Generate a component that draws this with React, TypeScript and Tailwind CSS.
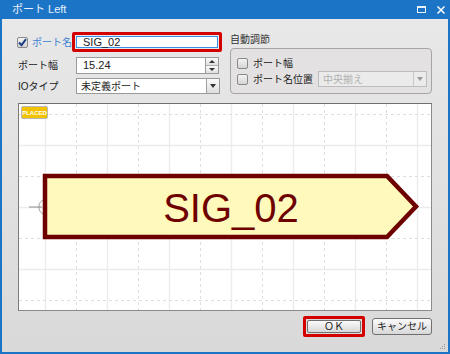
import React from 'react';

const font = "font-['Liberation_Sans','Noto_Sans_CJK_JP',sans-serif]";

function CheckBox({ checked }: { checked?: boolean }) {
    return (
        <span className="w-[11px] h-[11px] shrink-0 rounded-[2px] border border-[#8a8a8a] bg-gradient-to-b from-[#f4f4f4] to-[#d4d4d4] flex items-center justify-center">
            {checked && (
                <svg width="9" height="9" viewBox="0 0 9 9">
                    <path d="M1 4.5 L3.5 7.2 L8 1.2" fill="none" stroke="#1d3f86" strokeWidth="2" />
                </svg>
            )}
        </span>
    );
}

function Canvas() {
    const vx = Array.from({ length: 13 }, (_, k) => 26 + 31 * k);
    const hy = Array.from({ length: 7 }, (_, k) => 10 + 31 * k);
    return (
        <svg width="412" height="206" viewBox="0 0 412 206" className="block bg-white">
            {vx.map((x, k) => (
                <line key={'v' + x} x1={x + 0.5} y1="0" x2={x + 0.5} y2="206"
                    stroke={k % 2 === 0 ? '#ececec' : '#dedede'}
                    strokeWidth={k % 2 === 0 ? 1.5 : 1}
                    strokeDasharray={k % 2 === 0 ? undefined : '3 3'} />
            ))}
            {hy.map((y, k) => (
                <line key={'h' + y} x1="0" y1={y + 0.5} x2="412" y2={y + 0.5}
                    stroke={k % 2 === 1 ? '#ececec' : '#dedede'}
                    strokeWidth={k % 2 === 1 ? 1.5 : 1}
                    strokeDasharray={k % 2 === 1 ? undefined : '3 3'} />
            ))}

            {/* PLACED badge */}
            <rect x="2.5" y="2.5" width="26" height="12" rx="1.5" fill="#f2c200" stroke="#b8b8b8" />
            <text x="15.5" y="11" textAnchor="middle" fontSize="6" fontWeight="bold" fill="#fff"
                fontFamily="Liberation Sans, sans-serif">PLACED</text>

            {/* connector */}
            <line x1="10" y1="103" x2="23" y2="103" stroke="#777" strokeWidth="0.8" />
            <path d="M24 96 A8 8 0 0 0 24 110" fill="none" stroke="#888" strokeWidth="0.8" />

            {/* port */}
            <polygon points="26,72 368,72 397,102.5 368,133 26,133" fill="#fffabb" stroke="#6e0000" strokeWidth="4.5" />
            <text x="212" y="118" textAnchor="middle" fontSize="40" fill="#6e0000"
                fontFamily="Liberation Sans, sans-serif">SIG_02</text>
        </svg>
    );
}

function App() {
    return (
        <div className={`w-[450px] h-[354px] bg-[#1c74c6] flex flex-col text-[10px] text-[#222] whitespace-nowrap ${font}`}>

            <div className="h-[19px] flex items-center pl-[12px] pr-[5px] text-white/90 text-[11px]">
                <span className="leading-none">ポート Left</span>
                <div className="ml-auto flex items-center gap-[11px]">
                    <span className="w-[9px] h-[7px] border border-t-2 border-white/90" />
                    <svg width="8" height="8" viewBox="0 0 8 8">
                        <path d="M0.5 0.5 L7.5 7.5 M7.5 0.5 L0.5 7.5" stroke="#fff" strokeWidth="1.5" />
                    </svg>
                </div>
            </div>

            <div className="flex-1 mx-[2px] mb-[2px] bg-gradient-to-b from-[#e8e8e8] to-[#d9d9d9] flex flex-col px-[16px] pt-[13px] relative">

                <div className="flex gap-[9px] h-[62px]">
                    <div className="w-[203px] shrink-0 flex flex-col">
                        <div className="h-[20px] flex items-center">
                            <span className="-ml-[1px]"><CheckBox checked /></span>
                            <span className="ml-[4px] text-[#3b7fd6] shrink-0">ポート名</span>
                            <div className="ml-auto shrink-0 w-[150px] h-[20px] border-[3px] border-[#d40000] rounded-[2px] p-[1px]">
                                <div className="h-full bg-white border border-[#3b8ee6] flex items-center pl-[6px] leading-none text-[11px]">SIG_02</div>
                            </div>
                        </div>
                        <div className="mt-[5px] h-[17px] flex items-center">
                            <span className="w-[58px] shrink-0">ポート幅</span>
                            <div className="w-[130px] shrink-0 h-full bg-white border border-[#9a9a9a] flex items-center pl-[6px] text-[11px]">15.24</div>
                            <div className="w-[13px] shrink-0 h-full flex flex-col border border-l-0 border-[#9a9a9a]">
                                <div className="flex-1 bg-gradient-to-b from-[#fafafa] to-[#e0e0e0] border-b border-[#b0b0b0] flex items-center justify-center">
                                    <span className="w-0 h-0 border-x-[3px] border-x-transparent border-b-[3px] border-b-[#333]" />
                                </div>
                                <div className="flex-1 bg-gradient-to-b from-[#fafafa] to-[#e0e0e0] flex items-center justify-center">
                                    <span className="w-0 h-0 border-x-[3px] border-x-transparent border-t-[3px] border-t-[#333]" />
                                </div>
                            </div>
                        </div>
                        <div className="mt-[4px] h-[16px] flex items-center">
                            <span className="w-[58px] shrink-0">IOタイプ</span>
                            <div className="w-[144px] shrink-0 h-full bg-white border border-[#9a9a9a] flex items-center">
                                <span className="pl-[4px] flex-1">未定義ポート</span>
                                <div className="w-[13px] h-full border-l border-[#a0a0a0] bg-gradient-to-b from-[#fafafa] to-[#dedede] flex items-center justify-center">
                                    <span className="w-0 h-0 border-x-[3px] border-x-transparent border-t-[4px] border-t-[#333]" />
                                </div>
                            </div>
                        </div>
                    </div>

                    <div className="w-[202px] shrink-0 flex flex-col">
                        <span className="h-[14px] pt-[1px] leading-[13px] text-[#333]">自動調節</span>
                        <div className="mt-[2px] h-[46px] border border-[#a5a5a5] rounded-[4px] bg-[#e3e1e1] flex flex-col pl-[6px] pt-[6px]">
                            <div className="h-[16px] flex items-center gap-[5px]">
                                <CheckBox />
                                <span>ポート幅</span>
                            </div>
                            <div className="h-[16px] flex items-center gap-[5px]">
                                <CheckBox />
                                <span className="shrink-0">ポート名位置</span>
                                <div className="ml-auto mr-[7px] w-[109px] shrink-0 h-full border border-[#bdbdbd] bg-[#ebebeb] flex items-center">
                                    <span className="pl-[4px] flex-1 text-[#b0b0b0]">中央揃え</span>
                                    <div className="w-[13px] h-full border-l border-[#c8c8c8] flex items-center justify-center">
                                        <span className="w-0 h-0 border-x-[3px] border-x-transparent border-t-[4px] border-t-[#999]" />
                                    </div>
                                </div>
                            </div>
                        </div>
                    </div>
                </div>

                <div className="mt-[9px] w-[414px] h-[208px] border border-[#8a8a8a] border-t-[#6f6f6f] border-l-[#7a7a7a]">
                    <Canvas />
                </div>

                <div className="mt-[5px] flex justify-end items-center gap-[7px]">
                    <div className="w-[62px] h-[21px] border-[3px] border-[#d40000] rounded-[2px] p-[1px]">
                        <div className="h-full rounded-[2px] border border-[#707070] bg-gradient-to-b from-[#fbfbfb] to-[#d8d8d8] flex items-center justify-center leading-none">ＯＫ</div>
                    </div>
                    <div className="w-[60px] h-[17px] rounded-[3px] border border-[#707070] bg-gradient-to-b from-[#fbfbfb] to-[#d8d8d8] flex items-center justify-center leading-none">キャンセル</div>
                </div>

                <div className="absolute right-[3px] bottom-[3px] grid grid-cols-3 gap-[1px]">
                    <span className="w-[1px] h-[1px]" />
                    <span className="w-[1px] h-[1px]" />
                    <span className="w-[1px] h-[1px] bg-[#999]" />
                    <span className="w-[1px] h-[1px]" />
                    <span className="w-[1px] h-[1px] bg-[#999]" />
                    <span className="w-[1px] h-[1px] bg-[#999]" />
                    <span className="w-[1px] h-[1px] bg-[#999]" />
                    <span className="w-[1px] h-[1px] bg-[#999]" />
                    <span className="w-[1px] h-[1px] bg-[#999]" />
                </div>
            </div>
        </div>
    );
}

export default App;
